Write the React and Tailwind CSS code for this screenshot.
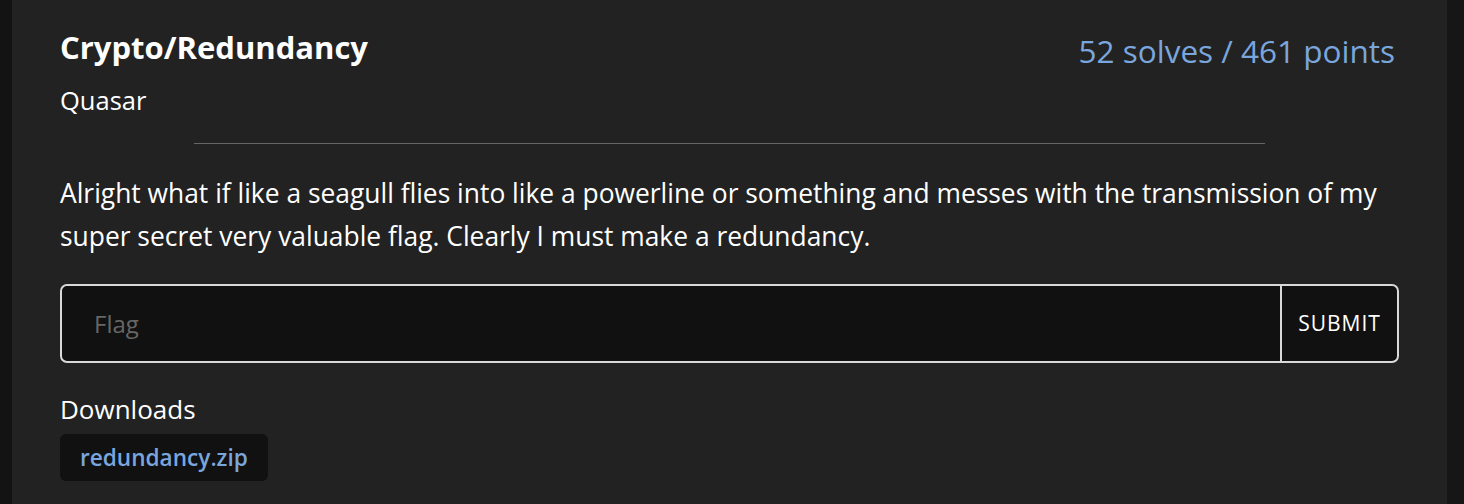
import React from "react";

function App() {
  return (
    <div className="w-[1464px] h-[504px] overflow-hidden bg-[#161616] flex" style={{ fontFamily: '"Open Sans", "Noto Sans", sans-serif' }}>
      <div className="w-[12px] bg-[#131313]" />
      <div className="w-[1435px] bg-[#222222] px-[48px] pt-[26px] text-white">
        {/* Header */}
        <div className="flex justify-between items-start">
          <div>
            <h1 className="text-[31px] font-bold leading-[42px]">Crypto/Redundancy</h1>
            <div className="text-[25.5px] leading-[36px] mt-[14px]">Quasar</div>
          </div>
          <div className="text-[31.5px] leading-[42px] text-[#7aa6de] mt-[4px] pr-[4px]">52 solves / 461 points</div>
        </div>

        <div className="w-[80%] mx-auto border-t border-[#666] mt-[25px]" />

        <p className="text-[26.4px] leading-[43px] mt-[28px]">
          Alright what if like a seagull flies into like a powerline or something and messes with the transmission of my
          super secret very valuable flag. Clearly I must make a redundancy.
        </p>

        {/* Flag form */}
        <form className="flex mt-[26px] h-[79px] border-2 border-[#d9d9d9] rounded-[7px] bg-[#111111] overflow-hidden">
          <input
            type="text"
            placeholder="Flag"
            className="flex-1 bg-transparent px-[32px] text-[24px] text-white placeholder-[#666] outline-none"
          />
          <button type="button" className="w-[117px] border-l-2 border-[#d9d9d9] text-[21px] tracking-[1px] text-white">
            SUBMIT
          </button>
        </form>

        <div className="text-[26px] leading-[36px] mt-[28px]">Downloads</div>
        <div className="mt-[7px]">
          <span className="inline-block bg-[#111111] rounded-[6px] px-[20px] h-[47px] leading-[47px] text-[22.6px] font-semibold text-[#7aa6de]">
            redundancy.zip
          </span>
        </div>
      </div>
    </div>
  );
}

export default App;
